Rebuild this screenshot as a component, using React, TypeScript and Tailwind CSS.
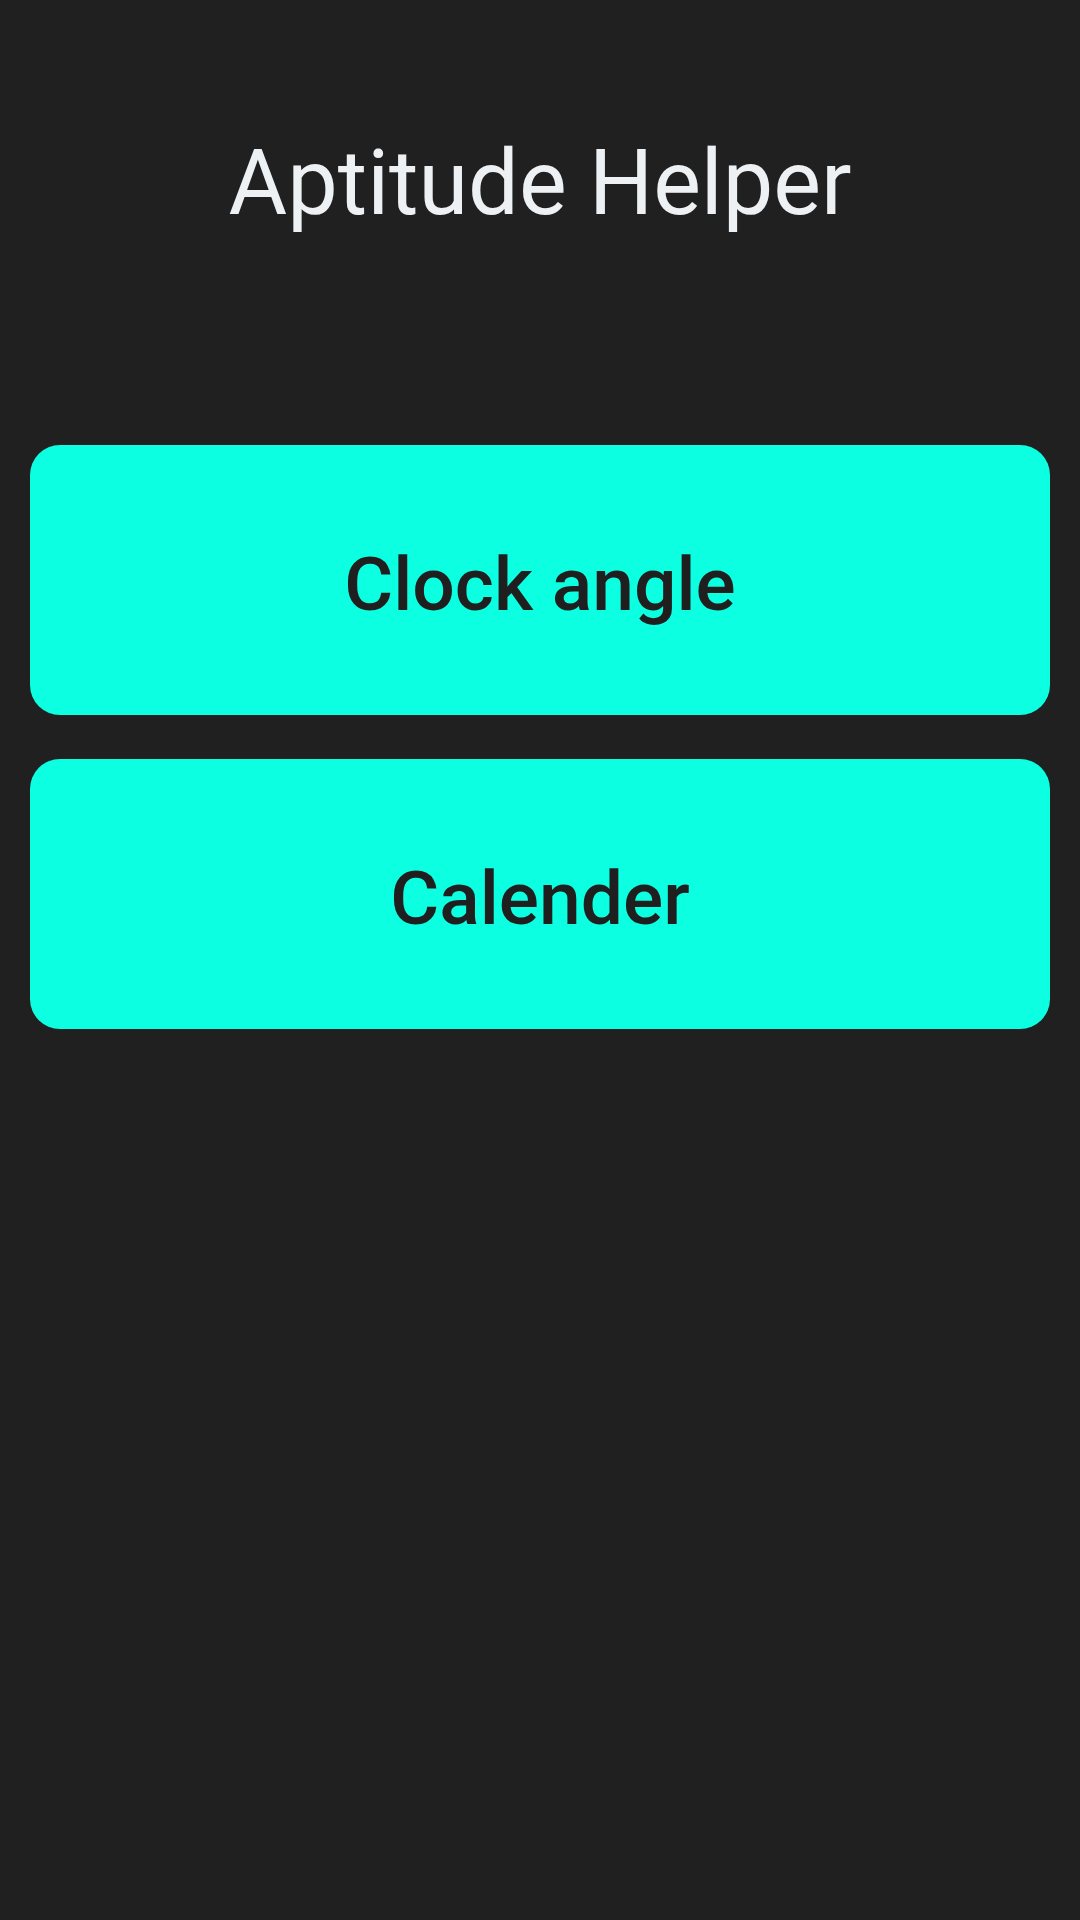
export default function App() {
  const items = ['Clock angle', 'Calender']
  return (
    <div className="min-h-[1920px] w-[1080px] bg-[#202020] px-[30px] pt-[139px]" style={{ fontFamily: 'Roboto, "Noto Sans", sans-serif' }}>
      <h1 className="text-center text-[90px] leading-[90px] font-normal text-[#eef1f3]">Aptitude Helper</h1>
      <div className="mt-[216px] flex flex-col gap-[44px]">
        {items.map((label) => (
          <button
            key={label}
            className="flex h-[270px] w-full items-center justify-center rounded-[30px] bg-[#0cffe0] pt-[8px] text-[75px] font-medium text-[#1f1f1f]"
          >
            {label}
          </button>
        ))}
      </div>
    </div>
  )
}
